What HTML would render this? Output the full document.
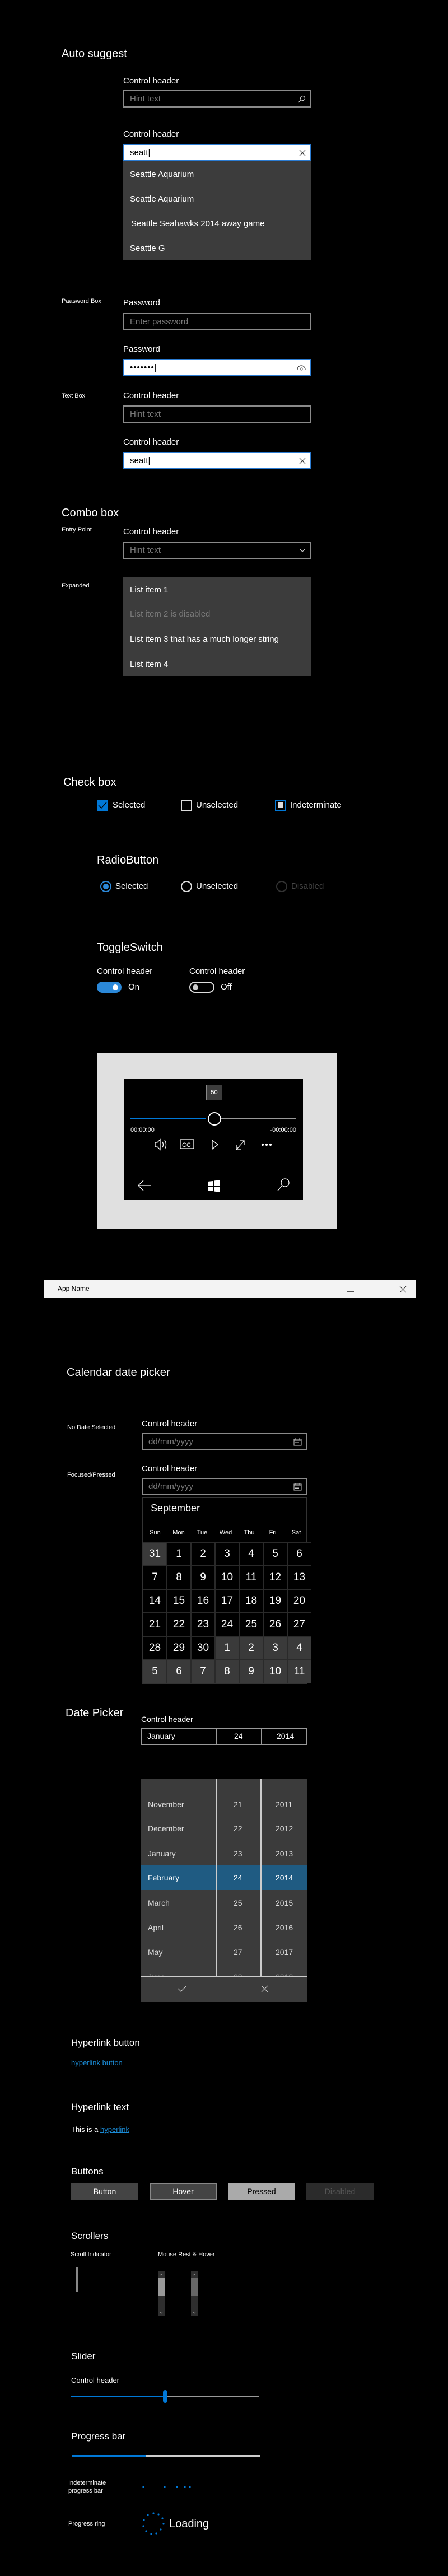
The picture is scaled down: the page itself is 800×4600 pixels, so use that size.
<!DOCTYPE html>
<html><head><meta charset="utf-8"><style>
*{margin:0;padding:0;box-sizing:border-box}
body{width:800px;height:4600px;background:#000;position:relative;overflow:hidden;font-family:"Liberation Sans",sans-serif;color:#fff}
.a{position:absolute;white-space:nowrap}
.h1{font-size:20px;line-height:28px}
.hd{font-size:15px;line-height:20px}
.sm{font-size:11px;line-height:14px}
.box{position:absolute;border:2px solid #8a8a8a;background:#000;height:31px;width:336px;left:220px}
.box .hint{position:absolute;left:10px;top:4px;font-size:15px;line-height:20px;color:#7a7a7a}
.foc{background:#fff;border-color:#2b7cd3;color:#000}
.dd{position:absolute;left:220px;width:336px;background:#3c3c3c}
.dd div{position:absolute;left:12px;font-size:15px;line-height:20px}
.cal{position:absolute;left:254px;top:2673px;width:295px;height:334px;background:#000;border:2px solid #333}
.grid{position:absolute;left:0;top:79px;display:grid;grid-template-columns:repeat(7,41px);grid-auto-rows:40px;gap:2px;background:#2a2a2a;padding:1px 0}
.grid div{background:#000;text-align:center;font-size:19px;line-height:40px}
.grid .g{background:#3a3a3a}
.dn{position:absolute;top:56px;font-size:11px;width:42px;text-align:center}
.fl{position:absolute;left:252px;top:3177px;width:297px;height:398px;background:#3b3b3b;overflow:hidden}
.fl .r{position:absolute;left:0;width:297px;height:44px;font-size:14px;line-height:44px;color:#ddd}
.fl .r span{position:absolute}
.btn{position:absolute;top:3898px;width:120px;height:31px;text-align:center;font-size:14px;line-height:31px}
</style></head><body>

<div class="a h1" style="left:110px;top:82px">Auto suggest</div>
<div class="a hd" style="left:220px;top:135px">Control header</div>
<div class="box" style="top:161px"><span class="hint">Hint text</span>
<svg class="a" style="right:8px;top:7px" width="14" height="14" viewBox="0 0 14 14"><circle cx="8.5" cy="5.5" r="4" fill="none" stroke="#ccc" stroke-width="1.2"/><path d="M5.5 8.5L1 13" stroke="#ccc" stroke-width="1.2"/></svg></div>
<div class="a hd" style="left:220px;top:230px">Control header</div>
<div class="box foc" style="top:257px"><span class="hint" style="color:#000">seatt|</span>
<svg class="a" style="right:8px;top:8px" width="12" height="12"><path d="M1 1L11 11M11 1L1 11" stroke="#333" stroke-width="1.2"/></svg></div>
<div class="dd" style="top:287px;height:177px">
<div style="top:15px">Seattle Aquarium</div><div style="top:59px">Seattle Aquarium</div><div style="top:103px;left:14px">Seattle Seahawks 2014 away game</div><div style="top:147px">Seattle G</div></div>

<div class="a sm" style="left:110px;top:531px">Paasword Box</div>
<div class="a hd" style="left:220px;top:531px">Password</div>
<div class="box" style="top:559px"><span class="hint">Enter password</span></div>
<div class="a hd" style="left:220px;top:614px">Password</div>
<div class="box foc" style="top:641px"><span class="hint" style="color:#000;letter-spacing:1px">•••••••|</span>
<svg class="a" style="right:8px;top:8px" width="16" height="12"><path d="M1 9A7 7 0 0 1 15 9" fill="none" stroke="#333" stroke-width="1.2"/><circle cx="8" cy="8" r="2" fill="none" stroke="#333"/></svg></div>
<div class="a sm" style="left:110px;top:700px">Text Box</div>
<div class="a hd" style="left:220px;top:697px">Control header</div>
<div class="box" style="top:724px"><span class="hint">Hint text</span></div>
<div class="a hd" style="left:220px;top:780px">Control header</div>
<div class="box foc" style="top:807px"><span class="hint" style="color:#000">seatt|</span>
<svg class="a" style="right:8px;top:8px" width="12" height="12"><path d="M1 1L11 11M11 1L1 11" stroke="#333" stroke-width="1.2"/></svg></div>

<div class="a h1" style="left:110px;top:902px">Combo box</div>
<div class="a sm" style="left:110px;top:939px">Entry Point</div>
<div class="a hd" style="left:220px;top:940px">Control header</div>
<div class="box" style="top:967px"><span class="hint">Hint text</span>
<svg class="a" style="right:8px;top:10px" width="12" height="8"><path d="M1 1L6 6L11 1" fill="none" stroke="#ccc" stroke-width="1.2"/></svg></div>
<div class="a sm" style="left:110px;top:1039px">Expanded</div>
<div class="dd" style="top:1031px;height:176px">
<div style="top:13px">List item 1</div><div style="top:56px;color:#7a7a7a">List item 2 is disabled</div><div style="top:101px">List item 3 that has a much longer string</div><div style="top:146px">List item 4</div></div>

<div class="a h1" style="left:113px;top:1383px">Check box</div>
<div class="a" style="left:173px;top:1428px;width:20px;height:20px;background:#0078d7"><svg width="20" height="20"><path d="M3 10L8 15L17 5" fill="none" stroke="#000" stroke-width="1.4"/></svg></div>
<div class="a hd" style="left:201px;top:1428px">Selected</div>
<div class="a" style="left:323px;top:1428px;width:20px;height:20px;border:2px solid #ddd"></div>
<div class="a hd" style="left:350px;top:1428px">Unselected</div>
<div class="a" style="left:491px;top:1428px;width:20px;height:20px;border:2px solid #0078d7"><div style="margin:3px;width:10px;height:10px;background:#ddd"></div></div>
<div class="a hd" style="left:518px;top:1428px">Indeterminate</div>

<div class="a h1" style="left:173px;top:1522px">RadioButton</div>
<div class="a" style="left:179px;top:1573px;width:20px;height:20px;border:2px solid #2b88d8;border-radius:50%"><div style="margin:3px;width:10px;height:10px;border-radius:50%;background:#2b88d8"></div></div>
<div class="a hd" style="left:206px;top:1573px">Selected</div>
<div class="a" style="left:323px;top:1573px;width:20px;height:20px;border:2px solid #ddd;border-radius:50%"></div>
<div class="a hd" style="left:350px;top:1573px">Unselected</div>
<div class="a" style="left:493px;top:1573px;width:20px;height:20px;border:2px solid #333;border-radius:50%"></div>
<div class="a hd" style="left:520px;top:1573px;color:#444">Disabled</div>

<div class="a h1" style="left:173px;top:1678px">ToggleSwitch</div>
<div class="a hd" style="left:173px;top:1725px">Control header</div>
<div class="a hd" style="left:338px;top:1725px">Control header</div>
<div class="a" style="left:173px;top:1753px;width:44px;height:20px;border-radius:10px;background:#2b88d8"><div style="position:absolute;right:6px;top:5px;width:10px;height:10px;border-radius:50%;background:#fff"></div></div>
<div class="a hd" style="left:229px;top:1753px">On</div>
<div class="a" style="left:338px;top:1753px;width:45px;height:20px;border-radius:10px;border:2px solid #ddd"><div style="position:absolute;left:4px;top:3px;width:10px;height:10px;border-radius:50%;background:#ccc"></div></div>
<div class="a hd" style="left:394px;top:1753px">Off</div>

<div class="a" style="left:173px;top:1881px;width:428px;height:313px;background:#e0e0e0"></div>
<div class="a" style="left:221px;top:1926px;width:320px;height:216px;background:#000">
<div class="a" style="left:147px;top:11px;width:29px;height:28px;background:#3c3c3c;border:1px solid #888;font-size:11px;line-height:26px;text-align:center">50</div>
<div class="a" style="left:12px;top:71px;width:135px;height:2px;background:#0078d7"></div>
<div class="a" style="left:162px;top:71px;width:146px;height:2px;background:#999"></div>
<div class="a" style="left:150px;top:60px;width:24px;height:24px;border:2px solid #fff;border-radius:50%;background:#000"></div>
<div class="a" style="left:12px;top:86px;font-size:11px">00:00:00</div>
<div class="a" style="right:12px;top:86px;font-size:11px">-00:00:00</div>
<svg class="a" style="left:0;top:100px" width="320" height="116" viewBox="0 0 320 116" fill="none" stroke="#fff" stroke-width="1.3">
<path d="M56 14H60L65 9V27L60 22H56Z"/><path d="M69 13Q72 18 69 23M73 10Q78 18 73 26"/>
<rect x="101" y="9" width="24" height="16"/><text x="104" y="22" font-size="11" fill="#fff" stroke="none" font-family="Liberation Sans">CC</text>
<path d="M158 10L168 18L158 26Z"/><path d="M201 27L215 11M207 11H215V19M201 19V27H209"/>
<circle cx="248" cy="18" r="1.5" fill="#fff"/><circle cx="255" cy="18" r="1.5" fill="#fff"/><circle cx="262" cy="18" r="1.5" fill="#fff"/>
<path d="M26 91H48M26 91L35 82M26 91L35 100"/>
<path d="M150 84L159 83V91H150ZM161 82.5L172 81V91H161ZM150 93H159V101L150 100ZM161 93H172V103L161 101.5Z" fill="#fff" stroke="none"/>
<circle cx="288" cy="86" r="7"/><path d="M283 91L275 100"/>
</svg></div>

<div class="a" style="left:79px;top:2286px;width:664px;height:32px;background:#f3f3f3;border-bottom:1px solid #aaa"></div>
<div class="a" style="left:103px;top:2294px;font-size:12px;color:#000">App Name</div>
<div class="a" style="left:620px;top:2306px;width:12px;height:1px;background:#555"></div>
<div class="a" style="left:667px;top:2296px;width:12px;height:12px;border:1px solid #333"></div>
<svg class="a" style="left:713px;top:2296px" width="13" height="13"><path d="M1 1L12 12M12 1L1 12" stroke="#333" stroke-width="1"/></svg>

<div class="a h1" style="left:119px;top:2437px">Calendar date picker</div>
<div class="a sm" style="left:120px;top:2542px">No Date Selected</div>
<div class="a hd" style="left:253px;top:2533px">Control header</div>
<div class="box" style="left:253px;top:2559px;width:296px"><span class="hint">dd/mm/yyyy</span>
<svg class="a" style="right:8px;top:7px" width="15" height="14"><rect x="1" y="2" width="13" height="11" fill="none" stroke="#ccc"/><path d="M1 5H14M4 0V3M11 0V3" stroke="#ccc"/><path d="M3 8H12M3 10.5H12" stroke="#ccc" stroke-dasharray="1 1"/></svg></div>
<div class="a sm" style="left:120px;top:2627px">Focused/Pressed</div>
<div class="a hd" style="left:253px;top:2613px">Control header</div>
<div class="box" style="left:253px;top:2639px;width:296px"><span class="hint">dd/mm/yyyy</span>
<svg class="a" style="right:8px;top:7px" width="15" height="14"><rect x="1" y="2" width="13" height="11" fill="none" stroke="#ccc"/><path d="M1 5H14M4 0V3M11 0V3" stroke="#ccc"/><path d="M3 8H12M3 10.5H12" stroke="#ccc" stroke-dasharray="1 1"/></svg></div>
<div class="cal">
<div class="a" style="left:13px;top:8px;font-size:18px">September</div>
<div class="dn" style="left:0">Sun</div><div class="dn" style="left:42px">Mon</div><div class="dn" style="left:84px">Tue</div><div class="dn" style="left:126px">Wed</div><div class="dn" style="left:168px">Thu</div><div class="dn" style="left:210px">Fri</div><div class="dn" style="left:252px">Sat</div>
<div class="grid">
<div class="g">31</div><div>1</div><div>2</div><div>3</div><div>4</div><div>5</div><div>6</div>
<div>7</div><div>8</div><div>9</div><div>10</div><div>11</div><div>12</div><div>13</div>
<div>14</div><div>15</div><div>16</div><div>17</div><div>18</div><div>19</div><div>20</div>
<div>21</div><div>22</div><div>23</div><div>24</div><div>25</div><div>26</div><div>27</div>
<div>28</div><div>29</div><div>30</div><div class="g">1</div><div class="g">2</div><div class="g">3</div><div class="g">4</div>
<div class="g">5</div><div class="g">6</div><div class="g">7</div><div class="g">8</div><div class="g">9</div><div class="g">10</div><div class="g">11</div>
</div></div>

<div class="a h1" style="left:117px;top:3045px">Date Picker</div>
<div class="a hd" style="left:252px;top:3060px;font-size:14px">Control header</div>
<div class="a" style="left:252px;top:3085px;width:297px;height:31px;border:2px solid #999;font-size:14px;line-height:27px">
<span class="a" style="left:9px">January</span><div class="a" style="left:132px;top:0;width:2px;height:27px;background:#999"></div>
<span class="a" style="left:164px">24</span><div class="a" style="left:212px;top:0;width:2px;height:27px;background:#999"></div><span class="a" style="left:240px">2014</span></div>
<div class="fl">
<div class="a" style="left:0;top:154px;width:297px;height:44px;background:#1f5b82"></div>
<div class="r" style="top:-27px;color:#888"><span style="left:12px">October</span><span style="left:165px">20</span><span style="left:240px">2010</span></div>
<div class="r" style="top:23px"><span style="left:12px">November</span><span style="left:165px">21</span><span style="left:240px">2011</span></div>
<div class="r" style="top:66px"><span style="left:12px">December</span><span style="left:165px">22</span><span style="left:240px">2012</span></div>
<div class="r" style="top:111px"><span style="left:12px">January</span><span style="left:165px">23</span><span style="left:240px">2013</span></div>
<div class="r" style="top:154px;color:#fff"><span style="left:12px">February</span><span style="left:165px">24</span><span style="left:240px">2014</span></div>
<div class="r" style="top:199px"><span style="left:12px">March</span><span style="left:165px">25</span><span style="left:240px">2015</span></div>
<div class="r" style="top:243px"><span style="left:12px">April</span><span style="left:165px">26</span><span style="left:240px">2016</span></div>
<div class="r" style="top:287px"><span style="left:12px">May</span><span style="left:165px">27</span><span style="left:240px">2017</span></div>
<div class="r" style="top:331px;color:#888"><span style="left:12px">June</span><span style="left:165px">28</span><span style="left:240px">2018</span></div>
<div class="a" style="left:134px;top:0;width:2px;height:353px;background:#ccc"></div>
<div class="a" style="left:213px;top:0;width:2px;height:353px;background:#ccc"></div>
<div class="a" style="left:0;top:351px;width:297px;height:47px;background:#3b3b3b;border-top:2px solid #ccc"></div>
<svg class="a" style="left:0;top:353px" width="297" height="45" fill="none" stroke="#ccc" stroke-width="1.2"><path d="M66 21L71 26L81 16M215 16L226 27M226 16L215 27"/></svg>
</div>

<div class="a" style="left:127px;top:3634px;font-size:17px;line-height:28px">Hyperlink button</div>
<div class="a" style="left:127px;top:3676px;font-size:13px;color:#1a8ad4;text-decoration:underline">hyperlink button</div>
<div class="a" style="left:127px;top:3749px;font-size:17px;line-height:28px">Hyperlink text</div>
<div class="a" style="left:127px;top:3795px;font-size:13px">This is a <span style="color:#1a8ad4;text-decoration:underline">hyperlink</span></div>
<div class="a" style="left:127px;top:3864px;font-size:17px;line-height:28px">Buttons</div>
<div class="btn" style="left:127px;background:#444">Button</div>
<div class="btn" style="left:267px;background:#444;border:2px solid #888;line-height:27px">Hover</div>
<div class="btn" style="left:407px;background:#aaa;color:#000">Pressed</div>
<div class="btn" style="left:547px;background:#2b2b2b;color:#555">Disabled</div>

<div class="a" style="left:127px;top:3979px;font-size:17px;line-height:28px">Scrollers</div>
<div class="a sm" style="left:126px;top:4019px">Scroll Indicator</div>
<div class="a sm" style="left:282px;top:4019px">Mouse Rest &amp; Hover</div>
<div class="a" style="left:136px;top:4048px;width:3px;height:44px;background:#888"></div>
<div class="a" style="left:282px;top:4056px;width:12px;height:80px;background:#2e2e2e"><div style="position:absolute;top:12px;width:12px;height:32px;background:#999"></div></div>
<div class="a" style="left:341px;top:4056px;width:12px;height:80px;background:#2e2e2e"><div style="position:absolute;top:12px;width:12px;height:32px;background:#666"></div></div>
<svg class="a" style="left:282px;top:4056px" width="72" height="80" fill="none" stroke="#999" stroke-width="0.8"><path d="M4 7L6 5L8 7M4 73L6 75L8 73M63 7L65 5L67 7M63 73L65 75L67 73"/></svg>

<div class="a" style="left:127px;top:4194px;font-size:17px;line-height:28px">Slider</div>
<div class="a hd" style="left:127px;top:4241px;font-size:13px">Control header</div>
<div class="a" style="left:127px;top:4279px;width:168px;height:2px;background:#0078d7"></div>
<div class="a" style="left:295px;top:4279px;width:168px;height:2px;background:#999"></div>
<div class="a" style="left:291px;top:4268px;width:8px;height:23px;border-radius:4px;background:#0078d7"></div>

<div class="a" style="left:127px;top:4337px;font-size:17px;line-height:28px">Progress bar</div>
<div class="a" style="left:129px;top:4384px;width:131px;height:3px;background:#0078d7"></div>
<div class="a" style="left:260px;top:4384px;width:205px;height:3px;background:#ccc"></div>
<div class="a sm" style="left:122px;top:4427px;line-height:14px">Indeterminate<br>progress bar</div>
<svg class="a" style="left:250px;top:4436px" width="100" height="10" fill="#0078d7"><circle cx="6" cy="5" r="1.6"/><circle cx="44" cy="5" r="1.6"/><circle cx="66" cy="5" r="1.6"/><circle cx="80" cy="5" r="1.6"/><circle cx="89" cy="5" r="1.6"/></svg>
<div class="a sm" style="left:122px;top:4500px">Progress ring</div>
<svg class="a" style="left:252px;top:4485px" width="44" height="44" fill="#0078d7"><circle cx="22" cy="3" r="1.6"/><circle cx="31" cy="5" r="1.6"/><circle cx="38" cy="12" r="1.6"/><circle cx="40" cy="22" r="1.6"/><circle cx="35" cy="32" r="1.6"/><circle cx="27" cy="39" r="1.6"/><circle cx="18" cy="40" r="1.6"/><circle cx="9" cy="35" r="1.6"/><circle cx="4" cy="26" r="1.6"/><circle cx="5" cy="15" r="1.6"/><circle cx="12" cy="6" r="1.6"/></svg>
<div class="a" style="left:302px;top:4494px;font-size:20px;line-height:26px">Loading</div>
</body></html>
